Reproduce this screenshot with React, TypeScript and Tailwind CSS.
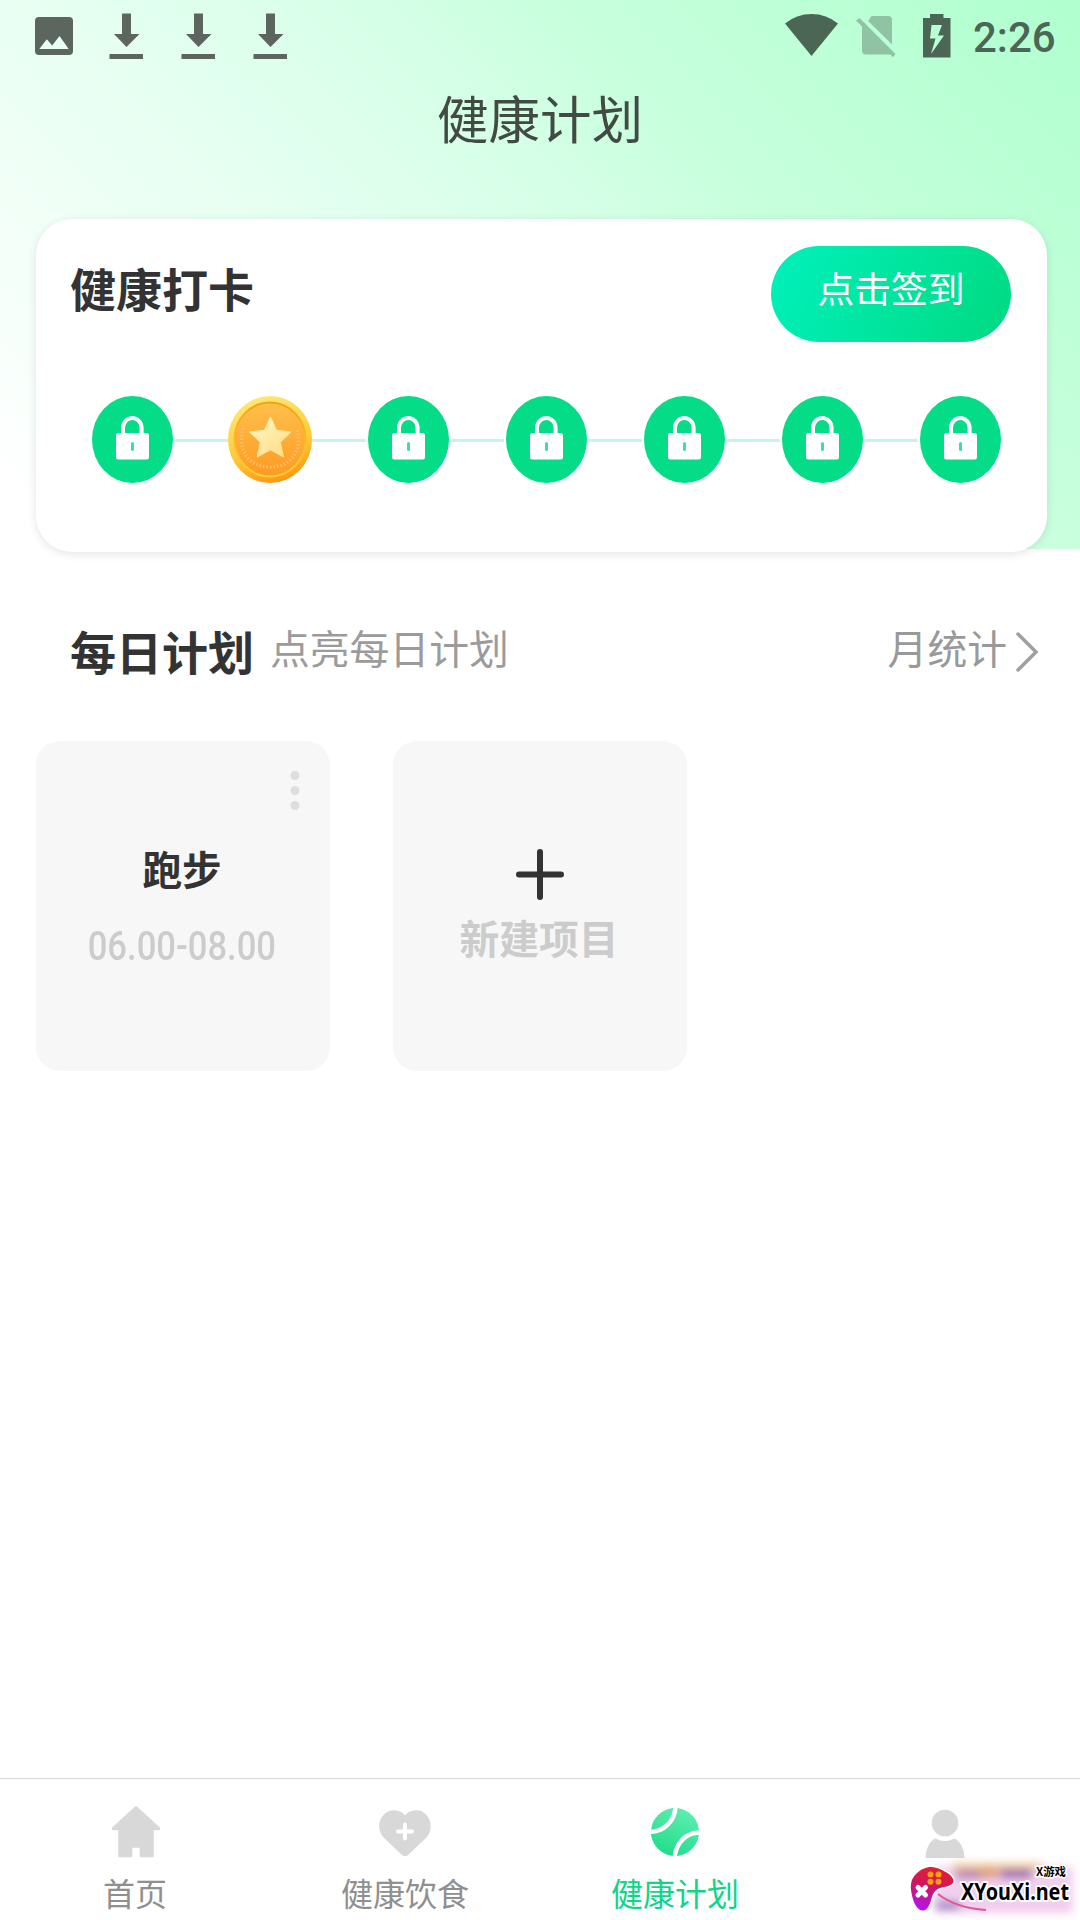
import type { ReactNode } from 'react'

const INK = '#5c665f'

function ImageIcon() {
  return (
    <svg width="72" height="72" viewBox="0 0 72 72" aria-hidden="true">
      <path
        fillRule="evenodd"
        fill={INK}
        d="M21 17h30a4 4 0 0 1 4 4v30a4 4 0 0 1-4 4H21a4 4 0 0 1-4-4V21a4 4 0 0 1 4-4Zm.3 32h29.400L41.500 36l-7.300 9.500-5.400-6.200Z"
      />
    </svg>
  )
}

function DownloadIcon() {
  return (
    <svg width="72" height="72" viewBox="0 0 72 72" aria-hidden="true">
      <path fill={INK} d="M32 13.500h9V34H49.500L36.500 47 24 34h8Z" />
      <path fill={INK} d="M19.500 54H53v5H19.500Z" />
    </svg>
  )
}

function StatusBar() {
  return (
    <div className="flex h-[72px] items-start pl-[18px]">
      <ImageIcon />
      <DownloadIcon />
      <DownloadIcon />
      <DownloadIcon />
      <svg className="ml-auto" width="72" height="72" viewBox="0 0 72 72" aria-hidden="true">
        <path fill="#4c6655" d="M35.500 56 9 23.500Q20.500 14 35.500 14T62 23.500Z" />
      </svg>
      <svg width="60" height="72" viewBox="0 0 60 72" aria-hidden="true">
        <path
          fill="#90c3a4"
          d="M23.500 16H40a4 4 0 0 1 4 4v24.500L20.200 21ZM14 24.500 43 53.500a4 4 0 0 1-2 1H18a4 4 0 0 1-4-4ZM11.500 18l36 36-2.500 3.300-37-36.800Z"
        />
      </svg>
      <svg width="63" height="72" viewBox="0 0 63 72" aria-hidden="true">
        <path
          fillRule="evenodd"
          fill="#4c6655"
          d="M22 14h13.500v4h7v39.500H15V18h7Zm1.500 11L22 38.500h5.500L23 54l13-18.500h-6L34 25Z"
        />
      </svg>
      <span className="w-[109px] pl-0.5 font-[Roboto] text-[42px] leading-[76px] font-medium text-[#4c6655]">
        2:26
      </span>
    </div>
  )
}

function LockBadge() {
  return (
    <svg className="mx-px" width="82" height="88" viewBox="0 0 82 88" aria-hidden="true">
      <ellipse cx="41.500" cy="43.500" rx="40.500" ry="43.500" fill="#04dc87" />
      <path d="M32 39.500V32a9.300 10 0 0 1 18.600 0V39.500" fill="none" stroke="#fff" strokeWidth="4" />
      <rect x="25" y="37" width="33" height="26.500" rx="2.500" fill="#fff" />
      <rect x="40" y="46" width="3" height="9" rx="1.500" fill="#3fdcab" />
    </svg>
  )
}

function CoinBadge() {
  return (
    <svg width="84" height="88" viewBox="0 0 84 88" aria-hidden="true">
      <defs>
        <linearGradient id="coinRim" x1="0.300" y1="0" x2="0.600" y2="1">
          <stop offset="0" stopColor="#ffe878" />
          <stop offset="0.600" stopColor="#fecb35" />
          <stop offset="1" stopColor="#ff960f" />
        </linearGradient>
        <linearGradient id="coinLip" x1="0" y1="0" x2="0" y2="1">
          <stop offset="0" stopColor="#f2a312" />
          <stop offset="1" stopColor="#ffcf40" />
        </linearGradient>
        <linearGradient id="coinFace" x1="0" y1="0" x2="0" y2="1">
          <stop offset="0" stopColor="#ffc04b" />
          <stop offset="1" stopColor="#ff9a22" />
        </linearGradient>
        <linearGradient id="coinStar" x1="0" y1="0" x2="0.700" y2="1">
          <stop offset="0" stopColor="#fff6c8" />
          <stop offset="1" stopColor="#ffe08a" />
        </linearGradient>
      </defs>
      <ellipse cx="42" cy="43.500" rx="42" ry="43.500" fill="url(#coinRim)" />
      <ellipse cx="42" cy="43.500" rx="35.500" ry="37" fill="url(#coinFace)" stroke="url(#coinLip)" strokeWidth="2" />
      <path
        d="M15 32C9 56 22 71 42 71s33-15 27-39"
        fill="none"
        stroke="#ffbd66"
        strokeWidth="3.500"
        strokeDasharray="1.500 2"
      />
      <path
        d="m42.500 21 6 13.300 14.500 1.600-10.700 10.300L55.500 61l-13-7.200L29.300 61l3-14.800L21.500 35.900 36.500 34.300Z"
        fill="url(#coinStar)"
        stroke="url(#coinStar)"
        strokeLinejoin="round"
      />
    </svg>
  )
}

const DAYS = [
  { id: 1, signed: false },
  { id: 2, signed: true },
  { id: 3, signed: false },
  { id: 4, signed: false },
  { id: 5, signed: false },
  { id: 6, signed: false },
  { id: 7, signed: false },
]

function CheckInCard() {
  return (
    <section className="mt-[75px] mr-[33px] ml-[36px] h-[333px] rounded-[36px] bg-white shadow-[0_2px_10px_rgba(0,0,0,0.11)]">
      <div className="flex justify-between pt-[27px] pr-[36px] pl-[34px]">
        <h2 className="text-[46px] leading-[82px] font-bold text-[#333]">健康打卡</h2>
        <button className="h-[96px] w-[240px] rounded-full bg-linear-[115deg,#00f0ba_5%,#00dc86_90%] pb-[13px] text-[36.800px] leading-[83px] text-white">
          点击签到
        </button>
      </div>
      <div className="mt-[54px] flex items-center pl-[54px]">
        {DAYS.map((day, i) => (
          <div key={day.id} className="flex items-center">
            {i > 0 && <span className="h-[3px] w-[54px] bg-[#c5f4ec]" />}
            {day.signed ? <CoinBadge /> : <LockBadge />}
          </div>
        ))}
      </div>
    </section>
  )
}

function PlanHeader() {
  return (
    <div className="mt-[71px] flex h-[64px] items-start pl-[70px]">
      <h2 className="text-[46px] leading-[60px] font-bold text-[#333]">每日计划</h2>
      <p className="ml-[16px] text-[39.800px] leading-[54px] text-[#9b9b9b]">点亮每日计划</p>
      <a className="ml-auto flex items-start pr-[39px] text-[#999]">
        <span className="text-[39.800px] leading-[54px]">月统计</span>
        <svg className="mt-[11px] ml-[8px]" width="26" height="42" viewBox="0 0 26 42" aria-hidden="true">
          <path d="m3 3 18 18L3 39" fill="none" stroke="#a0a0a0" strokeWidth="3.500" strokeLinecap="round" />
        </svg>
      </a>
    </div>
  )
}

function PlanCards() {
  return (
    <div className="mt-[57px] flex gap-[63px] pl-[36px]">
      <article className="flex h-[330px] w-[294px] flex-col items-center rounded-[24px] bg-[#f7f7f7]">
        <svg className="mt-[28px] mr-[30px] self-end" width="10" height="42" viewBox="0 0 10 42" aria-hidden="true">
          <circle cx="5" cy="6.500" r="4.500" fill="#dedede" />
          <circle cx="5" cy="21.500" r="4.500" fill="#dedede" />
          <circle cx="5" cy="36.500" r="4.500" fill="#dedede" />
        </svg>
        <h3 className="mt-[27px] mr-[2px] text-[39.600px] leading-[60px] font-bold text-[#333]">跑步</h3>
        <p className="mt-[19px] mr-[2px] scale-x-[0.865] font-[Roboto] text-[40px] leading-[60px] font-medium text-[#ccc]">
          06.00-08.00
        </p>
      </article>
      <button className="flex h-[330px] w-[294px] flex-col items-center rounded-[24px] bg-[#f7f7f7]">
        <svg className="mt-[106px]" width="50" height="54" viewBox="0 0 50 54" aria-hidden="true">
          <path d="M25 5v45M4 27.500h42" stroke="#333" strokeWidth="6" strokeLinecap="round" />
        </svg>
        <span className="mt-[6px] mr-[2px] text-[39.800px] leading-[60px] font-bold text-[#ccc]">新建项目</span>
      </button>
    </div>
  )
}

type TabProps = {
  label?: string
  active?: boolean
  children: ReactNode
}

function Tab({ label, active, children }: TabProps) {
  return (
    <a className="flex flex-col items-center pt-[23px]">
      <svg width="60" height="60" viewBox="0 0 60 60" aria-hidden="true">
        {children}
      </svg>
      {label && (
        <span className={`mt-[6px] text-[32px] leading-[48px] ${active ? 'text-[#0fd586]' : 'text-[#8f8f8f]'}`}>
          {label}
        </span>
      )}
    </a>
  )
}

function TabBar() {
  return (
    <nav className="mt-auto grid h-[142px] grid-cols-4 border-t border-[#d8d8d8] bg-white">
      <Tab label="首页">
        <path
          d="M31 5.500 54 26.500V27H47.500V54H36V44.500H26V54H14.500V27H8v-.5Z"
          fill="#d8d8d8"
          stroke="#d8d8d8"
          strokeWidth="2.500"
          strokeLinejoin="round"
        />
      </Tab>
      <Tab label="健康饮食">
        <path
          d="M30 13.500C36 6.500 46 7 51 12.500c6.500 7 6 17 .5 23L33 53q-3 2.500-6 0L8.500 35.500C2.500 28 2.500 19 9 12.500 14 7 24 6.500 30 13.500Z"
          fill="#d8d8d8"
        />
        <path d="M30 22.500v14M23 29.500h14" stroke="#fff" strokeWidth="4" strokeLinecap="round" />
      </Tab>
      <Tab label="健康计划" active>
        <defs>
          <linearGradient id="ballFill" x1="0.300" y1="1" x2="0.750" y2="0">
            <stop offset="0" stopColor="#1edd8b" />
            <stop offset="1" stopColor="#62eeb1" />
          </linearGradient>
          <clipPath id="ballClip">
            <circle cx="30" cy="30" r="24.200" />
          </clipPath>
        </defs>
        <g clipPath="url(#ballClip)">
          <circle cx="30" cy="30" r="24.200" fill="url(#ballFill)" />
          <path
            d="M30.500 3C30.500 19 19 30.500 3 30M57 30.500C41 29.500 30.500 41 29.500 57"
            fill="none"
            stroke="#fff"
            strokeWidth="4.500"
          />
        </g>
      </Tab>
      <Tab>
        <circle cx="30" cy="21" r="13.300" fill="#d8d8d8" />
        <path d="M10.500 56C10.500 47 15 38.500 20.500 36.500q9.500 5 19 0C45 38.500 49.500 47 49.500 56Z" fill="#d8d8d8" />
      </Tab>
    </nav>
  )
}

// Site badge pinned to the bottom right corner
function SiteBadge() {
  return (
    <svg
      className="absolute right-0 bottom-0"
      width="180"
      height="64"
      viewBox="900 1856 180 64"
      role="img"
      aria-label="XYouXi.net"
    >
      <defs>
        <filter id="badgeBlur" x="-20%" y="-50%" width="140%" height="200%">
          <feGaussianBlur stdDeviation="4" />
        </filter>
        <linearGradient id="padFill" x1="0.600" y1="0" x2="0.400" y2="1">
          <stop offset="0" stopColor="#e3202a" />
          <stop offset="0.450" stopColor="#d01562" />
          <stop offset="1" stopColor="#b413f0" />
        </linearGradient>
      </defs>
      <g filter="url(#badgeBlur)">
        <rect x="934" y="1867" width="139" height="46" fill="#f1d0ef" />
        <rect x="952" y="1863" width="90" height="7" fill="#f0cba0" />
        <rect x="956" y="1870" width="24" height="9" fill="#b87fae" />
        <rect x="1000" y="1869" width="32" height="10" fill="#a070b0" />
        <rect x="980" y="1868" width="18" height="11" fill="#e0a080" />
        <rect x="936" y="1901" width="24" height="9" fill="#a08cc4" />
        <rect x="962" y="1905" width="108" height="5" fill="#f5c8ea" />
      </g>
      <path d="M938 1894q18 14 48 16" fill="none" stroke="#e0569b" strokeWidth="2" />
      <path
        d="M916 1874C921 1869 926 1867 931 1867C938 1867 944 1871 949 1874Q955 1879 953 1883Q950 1886 944 1887C937 1888 934 1891 932 1897C930 1904 928 1910 923.500 1910.500C917 1911 913 1902 911.500 1893C910 1885 911 1879 916 1874Z"
        fill="url(#padFill)"
        stroke="#fff"
        strokeWidth="3"
        strokeLinejoin="round"
        paintOrder="stroke"
      />
      <circle cx="930.500" cy="1874.500" r="3" fill="#ff9f17" />
      <circle cx="938.500" cy="1874.500" r="3" fill="#ff9f17" />
      <circle cx="930.500" cy="1881.700" r="3" fill="#ff9f17" />
      <circle cx="938.500" cy="1881.700" r="3" fill="#ff9f17" />
      <path d="m918 1887.500 7.500 7.500m0-7.500-7.500 7.500" stroke="#fff" strokeWidth="5" strokeLinecap="round" />
      <text
        x="1036"
        y="1876"
        textLength="30"
        lengthAdjust="spacingAndGlyphs"
        className="[font-family:'Noto_Sans_CJK_SC',sans-serif] text-[11px] font-bold"
        fill="#000"
        stroke="#fff"
        strokeWidth="3"
        strokeLinejoin="round"
        paintOrder="stroke"
      >
        X游戏
      </text>
      <text
        x="961"
        y="1899.500"
        textLength="108"
        lengthAdjust="spacingAndGlyphs"
        className="[font-family:'Noto_Sans',sans-serif] text-[24px] font-bold"
        fill="#000"
        stroke="#fff"
        strokeWidth="4"
        strokeLinejoin="round"
        paintOrder="stroke"
      >
        XYouXi.net
      </text>
    </svg>
  )
}

export default function App() {
  return (
    <div className="relative flex h-[1920px] w-[1080px] flex-col overflow-hidden bg-white [font-family:'Noto_Sans_CJK_SC',sans-serif]">
      <header className="h-[549px] bg-linear-[225deg,#b0ffcf_0%,#c8ffdd_33%,#d5ffe7_43%,#e9fff3_66%,#ffffff_96%]">
        <StatusBar />
        <h1 className="h-[72px] text-center text-[51.500px] leading-[90px] text-[#414b44]">健康计划</h1>
        <CheckInCard />
      </header>
      <PlanHeader />
      <PlanCards />
      <TabBar />
      <SiteBadge />
    </div>
  )
}
